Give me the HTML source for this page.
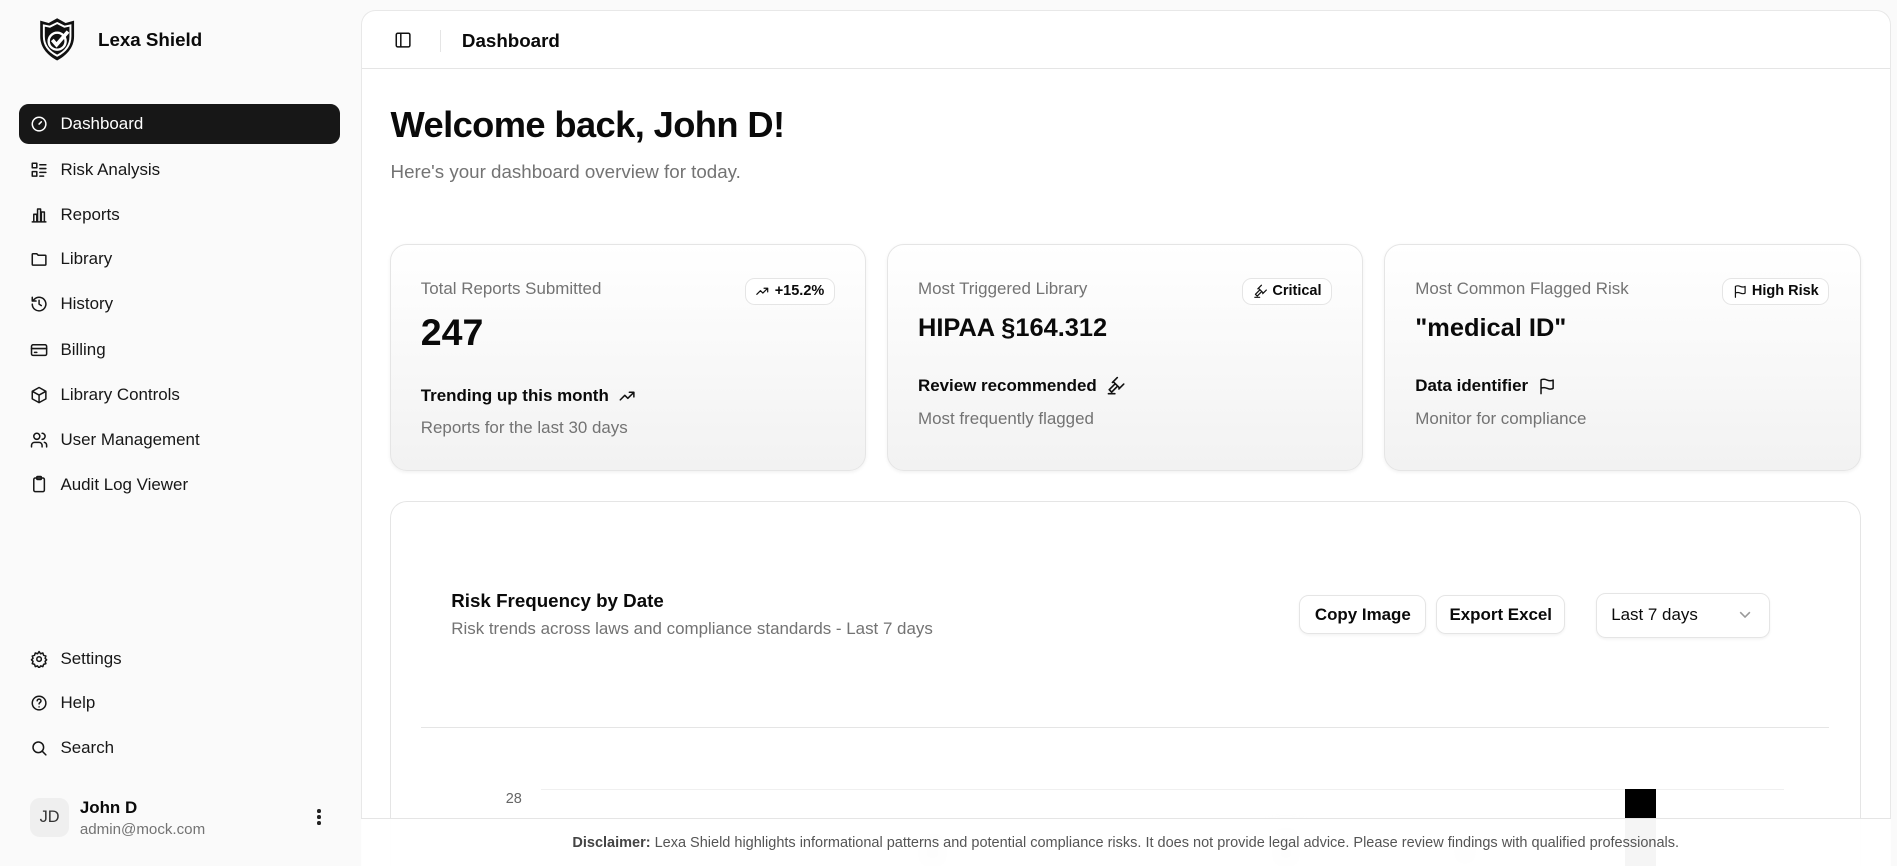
<!DOCTYPE html>
<html><head><meta charset="utf-8"><style>
html{zoom:1.2098;overflow:hidden;height:716px}
*{box-sizing:border-box;margin:0;padding:0}
body{width:1568px;height:716px;overflow:hidden;background:#fafafa;font-family:"Liberation Sans",sans-serif;color:#0a0a0a;position:relative}
.a{position:absolute}
.nav{position:absolute;left:16px;width:265px;height:33px;display:flex;align-items:center;padding-left:9px;font-size:14px;color:#171717}
.nav svg{width:15px;height:15px;margin-right:10px;fill:none;stroke:currentColor;stroke-width:2;stroke-linecap:round;stroke-linejoin:round}
.nav.on{background:#171717;color:#fff;border-radius:8px}
.card{position:absolute;top:202px;width:394px;height:187px;border:1px solid #e5e5e5;border-radius:14px;background:linear-gradient(#fff,#f2f2f2);box-shadow:0 1px 3px rgba(0,0,0,.06)}
.lbl{position:absolute;left:25px;top:28px;font-size:14px;color:#737373}
.badge{position:absolute;top:27px;right:25px;height:22px;border:1px solid #e5e5e5;border-radius:8px;background:#fff;font-size:12px;font-weight:bold;display:flex;align-items:center;padding:0 8px;gap:4px}
.badge svg,.ic{width:12px;height:12px;fill:none;stroke:#111;stroke-width:2;stroke-linecap:round;stroke-linejoin:round}
.val{position:absolute;left:25px;font-weight:bold}
.b1{position:absolute;left:25px;font-size:14px;font-weight:bold;display:flex;align-items:center;gap:8px}
.s1{position:absolute;left:25px;font-size:14px;color:#737373}
.btn{position:absolute;height:32px;border:1px solid #e5e5e5;border-radius:8px;background:#fff;font-size:14px;font-weight:bold;display:flex;align-items:center;justify-content:center;box-shadow:0 1px 2px rgba(0,0,0,.05)}
</style></head><body>
<svg class="a" style="left:32px;top:14px" width="30" height="37" viewBox="0 0 30 37"><path d="M15 1 L22 5 L29 3 V16 C29 26 22 32 15 36 C8 32 1 26 1 16 V3 L8 5 Z" fill="#111"/><path d="M15 5 L21 8 L26 7 V16 C26 24 21 29 15 32 C9 29 4 24 4 16 V7 L9 8 Z" fill="none" stroke="#fff" stroke-width="1.6"/><circle cx="15" cy="20" r="7" fill="none" stroke="#fff" stroke-width="2"/><path d="M11 19 L14.5 23 L24 12" fill="none" stroke="#fff" stroke-width="3"/></svg>
<div class="a" style="left:81px;top:24px;font-size:15.5px;font-weight:bold">Lexa Shield</div>

<div class="nav on" style="top:86px"><svg viewBox="0 0 24 24"><circle cx="12" cy="12" r="9"/><path d="M12 12l3-3"/></svg>Dashboard</div>
<div class="nav" style="top:124px"><svg viewBox="0 0 24 24"><rect x="3" y="3" width="6" height="6"/><rect x="3" y="14" width="6" height="6"/><path d="M13 5h8M13 10h8M13 15h8M13 20h5"/></svg>Risk Analysis</div>
<div class="nav" style="top:161px"><svg viewBox="0 0 24 24"><path d="M3 21h18M5 21V11h4v10M10 21V4h4v17M15 21V8h4v13"/></svg>Reports</div>
<div class="nav" style="top:198px"><svg viewBox="0 0 24 24"><path d="M3 6a1 1 0 0 1 1-1h5l2 2h9a1 1 0 0 1 1 1v11a1 1 0 0 1-1 1H4a1 1 0 0 1-1-1z"/></svg>Library</div>
<div class="nav" style="top:235px"><svg viewBox="0 0 24 24"><path d="M3 12a9 9 0 1 0 3-6.7L3 8M3 3v5h5M12 7v5l3 2"/></svg>History</div>
<div class="nav" style="top:273px"><svg viewBox="0 0 24 24"><rect x="2" y="5" width="20" height="14" rx="2"/><path d="M2 10h20M6 15h3"/></svg>Billing</div>
<div class="nav" style="top:310px"><svg viewBox="0 0 24 24"><path d="M12 2l9 5v10l-9 5-9-5V7z M3 7l9 5 9-5M12 12v10"/></svg>Library Controls</div>
<div class="nav" style="top:347px"><svg viewBox="0 0 24 24"><circle cx="9" cy="7" r="4"/><path d="M2 21v-2a4 4 0 0 1 4-4h6a4 4 0 0 1 4 4v2M16 3a4 4 0 0 1 0 8M22 21v-2a4 4 0 0 0-3-4"/></svg>User Management</div>
<div class="nav" style="top:384px"><svg viewBox="0 0 24 24"><rect x="5" y="4" width="14" height="18" rx="2"/><rect x="9" y="2" width="6" height="4" rx="1"/></svg>Audit Log Viewer</div>
<div class="nav" style="top:528px"><svg viewBox="0 0 24 24"><circle cx="12" cy="12" r="3"/><path d="M12 2l2 3 3-1 1 3 3 1-1 3 2 2-2 2 1 3-3 1-1 3-3-1-2 3-2-3-3 1-1-3-3-1 1-3-2-2 2-2-1-3 3-1 1-3 3 1z"/></svg>Settings</div>
<div class="nav" style="top:565px"><svg viewBox="0 0 24 24"><circle cx="12" cy="12" r="9"/><path d="M9.5 9a2.5 2.5 0 0 1 5 .5c0 1.5-2.5 2-2.5 3.5M12 17h.01"/></svg>Help</div>
<div class="nav" style="top:602px"><svg viewBox="0 0 24 24"><circle cx="11" cy="11" r="7"/><path d="M21 21l-5-5"/></svg>Search</div>
<div class="a" style="left:25px;top:660px;width:32px;height:32px;border-radius:8px;background:#efefef;font-size:13.5px;color:#333;display:flex;align-items:center;justify-content:center">JD</div>
<div class="a" style="left:66px;top:660px;font-size:14px;font-weight:bold">John D</div>
<div class="a" style="left:66px;top:679px;font-size:12.5px;color:#737373">admin@mock.com</div>
<div class="a" style="left:262px;top:669px;width:3px"><div style="width:3px;height:3px;border-radius:50%;background:#222;margin-bottom:2px"></div><div style="width:3px;height:3px;border-radius:50%;background:#222;margin-bottom:2px"></div><div style="width:3px;height:3px;border-radius:50%;background:#222"></div></div>

<div class="a" style="left:298px;top:8px;width:1265px;height:708px;background:#fff;border:1px solid #e8e8e8;border-bottom:none;border-radius:12px 12px 0 0;overflow:hidden">
 <div class="a" style="left:0;top:0;width:100%;height:48px;border-bottom:1px solid #e5e5e5"></div>
 <svg class="a" style="left:27px;top:17px" width="15" height="15" viewBox="0 0 24 24" fill="none" stroke="#111" stroke-width="2"><rect x="3" y="3" width="18" height="18" rx="2"/><path d="M9 3v18"/></svg>
 <div class="a" style="left:65px;top:16px;width:1px;height:18px;background:#e5e5e5"></div>
 <div class="a" style="left:83px;top:16px;font-size:15.5px;font-weight:bold">Dashboard</div>
 <div class="a" style="left:24px;top:77px;font-size:30px;font-weight:bold;letter-spacing:-.5px">Welcome back, John D!</div>
 <div class="a" style="left:24px;top:124px;font-size:15.5px;color:#737373">Here's your dashboard overview for today.</div>
</div>

<div class="card" style="left:322px">
 <div class="lbl">Total Reports Submitted</div>
 <div class="badge"><svg viewBox="0 0 24 24"><path d="M3 17l6-6 4 4 8-8M15 7h6v6"/></svg>+15.2%</div>
 <div class="val" style="top:54px;font-size:31px">247</div>
 <div class="b1" style="top:116px">Trending up this month <svg class="ic" style="width:15px;height:15px" viewBox="0 0 24 24"><path d="M3 17l6-6 4 4 8-8M15 7h6v6"/></svg></div>
 <div class="s1" style="top:143px">Reports for the last 30 days</div>
</div>
<div class="card" style="left:733px">
 <div class="lbl">Most Triggered Library</div>
 <div class="badge"><svg viewBox="0 0 24 24"><path d="M14 13l-7 7-3-3 7-7M16 16l6-6M8 8l6-6M9 7l8 8M3 22h8"/></svg>Critical</div>
 <div class="val" style="top:57px;font-size:21px;font-weight:600">HIPAA §164.312</div>
 <div class="b1" style="top:108px">Review recommended <svg class="ic" style="width:16px;height:16px" viewBox="0 0 24 24"><path d="M14 13l-7 7-3-3 7-7M16 16l6-6M8 8l6-6M9 7l8 8M3 22h8"/></svg></div>
 <div class="s1" style="top:135px">Most frequently flagged</div>
</div>
<div class="card" style="left:1144px">
 <div class="lbl">Most Common Flagged Risk</div>
 <div class="badge"><svg viewBox="0 0 24 24"><path d="M4 22V4s1-1 4-1 5 2 8 2 4-1 4-1v11s-1 1-4 1-5-2-8-2-4 1-4 1"/></svg>High Risk</div>
 <div class="val" style="top:57px;font-size:21px;font-weight:600">"medical ID"</div>
 <div class="b1" style="top:108px">Data identifier <svg class="ic" style="width:15px;height:15px" viewBox="0 0 24 24"><path d="M4 22V4s1-1 4-1 5 2 8 2 4-1 4-1v11s-1 1-4 1-5-2-8-2-4 1-4 1"/></svg></div>
 <div class="s1" style="top:135px">Monitor for compliance</div>
</div>

<div class="a" style="left:322px;top:414px;width:1216px;height:302px;border:1px solid #e5e5e5;border-bottom:none;border-radius:14px 14px 0 0;background:#fff"></div>
<div class="a" style="left:373px;top:488px;font-size:15.5px;font-weight:bold">Risk Frequency by Date</div>
<div class="a" style="left:373px;top:512px;font-size:14px;color:#737373">Risk trends across laws and compliance standards - Last 7 days</div>
<div class="btn" style="left:1074px;top:492px;width:105px">Copy Image</div>
<div class="btn" style="left:1187px;top:492px;width:107px">Export Excel</div>
<div class="btn" style="left:1319px;top:490px;width:144px;height:37px;font-weight:normal;justify-content:flex-start;padding-left:12px">Last 7 days<svg class="a" style="left:118px;top:14px" width="10" height="7" viewBox="0 0 10 7" fill="none" stroke="#999" stroke-width="1.3"><path d="M1 1l4 4 4-4"/></svg></div>
<div class="a" style="left:348px;top:601px;width:1164px;height:1px;background:#e5e5e5"></div>
<div class="a" style="left:447px;top:652px;width:1028px;height:1px;background:#f0f0f0"></div>
<div class="a" style="left:418px;top:654px;font-size:12px;color:#666">28</div>
<div class="a" style="left:1343px;top:652px;width:26px;height:64px;background:#000"></div>
<div class="a" style="left:760px;top:690px;width:22px;height:26px;background:#ccc;filter:blur(5px)"></div>
<div class="a" style="left:1052px;top:685px;width:22px;height:31px;background:#ccc;filter:blur(5px)"></div>
<div class="a" style="left:1200px;top:690px;width:22px;height:26px;background:#ddd;filter:blur(5px)"></div>

<div class="a" style="left:298px;top:676px;width:1265px;height:40px;background:rgba(255,255,255,.96);border-top:1px solid #e5e5e5;font-size:12px;color:#555;text-align:center;line-height:40px"><b style="color:#444">Disclaimer:</b> Lexa Shield highlights informational patterns and potential compliance risks. It does not provide legal advice. Please review findings with qualified professionals.</div>
</body></html>
